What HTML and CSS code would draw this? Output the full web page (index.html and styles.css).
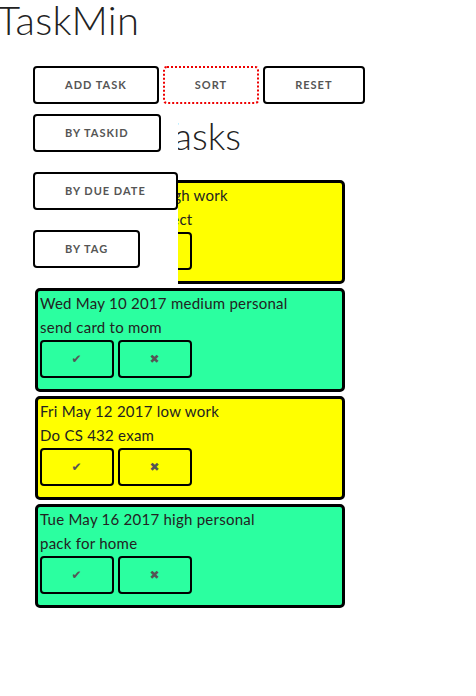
FILE: index.html
```html
<!DOCTYPE html>
<html lang="en">
<head>
<meta charset="utf-8">
<title>TaskMin</title>
<link rel="stylesheet" href="styles.css">
</head>
<body>
  <h1 class="title">TaskMin</h1>
  <main class="main">
    <div class="toolbar">
      <button class="btn">Add task</button>
      <button class="btn btn-focus">Sort</button>
      <button class="btn">Reset</button>
      <div class="dropdown">
        <button class="btn">By taskid</button>
        <button class="btn">By due date</button>
        <button class="btn">By tag</button>
      </div>
    </div>
    <h2 class="heading">Tasks</h2>
    <ul class="tasks">
      <li class="task task-yellow">
        <p class="task-line">Sat May 06 2017 high work</p>
        <p class="task-line">Do the CS 432 project</p>
        <div class="task-actions">
          <button class="btn task-btn">&#x2714;&#xFE0E;</button>
          <button class="btn task-btn">&#x2716;&#xFE0E;</button>
        </div>
      </li>
      <li class="task task-green">
        <p class="task-line">Wed May 10 2017 medium personal</p>
        <p class="task-line">send card to mom</p>
        <div class="task-actions">
          <button class="btn task-btn">&#x2714;&#xFE0E;</button>
          <button class="btn task-btn">&#x2716;&#xFE0E;</button>
        </div>
      </li>
      <li class="task task-yellow">
        <p class="task-line">Fri May 12 2017 low work</p>
        <p class="task-line">Do CS 432 exam</p>
        <div class="task-actions">
          <button class="btn task-btn">&#x2714;&#xFE0E;</button>
          <button class="btn task-btn">&#x2716;&#xFE0E;</button>
        </div>
      </li>
      <li class="task task-green">
        <p class="task-line">Tue May 16 2017 high personal</p>
        <p class="task-line">pack for home</p>
        <div class="task-actions">
          <button class="btn task-btn">&#x2714;&#xFE0E;</button>
          <button class="btn task-btn">&#x2716;&#xFE0E;</button>
        </div>
      </li>
    </ul>
  </main>
</body>
</html>
```

FILE: styles.css
```css
body {
  margin: 0;
  font: 15px/24px "Lato", "Open Sans", sans-serif;
  color: #222;
  background: #fff;
}

.title {
  margin: -4px 0 0 -3px;
  font-size: 40px;
  font-weight: 300;
  line-height: 48px;
  letter-spacing: 0.2px;
}

.main {
  padding-left: 33px;
}

.toolbar {
  position: relative;
  display: flex;
  gap: 4px;
  margin-top: 22px;
}

.btn {
  box-sizing: border-box;
  height: 38px;
  padding: 0 30px;
  border: 2px solid #000;
  border-radius: 4px;
  background: transparent;
  color: #555;
  font: 700 11px/34px "Lato", "Open Sans", sans-serif;
  letter-spacing: 1px;
  text-transform: uppercase;
  white-space: nowrap;
  cursor: pointer;
}

.btn-focus {
  border: 2px dotted #e00;
}

.dropdown {
  position: absolute;
  left: 0;
  top: 46px;
  z-index: 2;
  display: flex;
  flex-direction: column;
  align-items: flex-start;
  gap: 20px;
  width: 145px;
  padding: 2px 0 20px;
  background: #fff;
}

.heading {
  margin: 9px 0 22px;
  padding-left: 124px;
  font-size: 37px;
  font-weight: 300;
  line-height: 45px;
  letter-spacing: 0;
}

.tasks {
  list-style: none;
  display: flex;
  flex-direction: column;
  gap: 4px;
  margin: 0 0 0 2px;
  padding: 0;
}

.task {
  box-sizing: border-box;
  width: 310px;
  padding: 0 2px 11px;
  border: 3px solid #000;
  border-radius: 5px;
}

.task-yellow {
  background: #ffff00;
}

.task-green {
  background: #2bffa0;
}

.task-line {
  margin: 0;
  letter-spacing: 0.25px;
}

.task-actions {
  display: flex;
  gap: 4px;
  margin-top: 1px;
}

.task-btn {
  width: 74px;
  padding: 0;
  font-family: "DejaVu Sans", sans-serif;
  font-size: 12px;
}
```
